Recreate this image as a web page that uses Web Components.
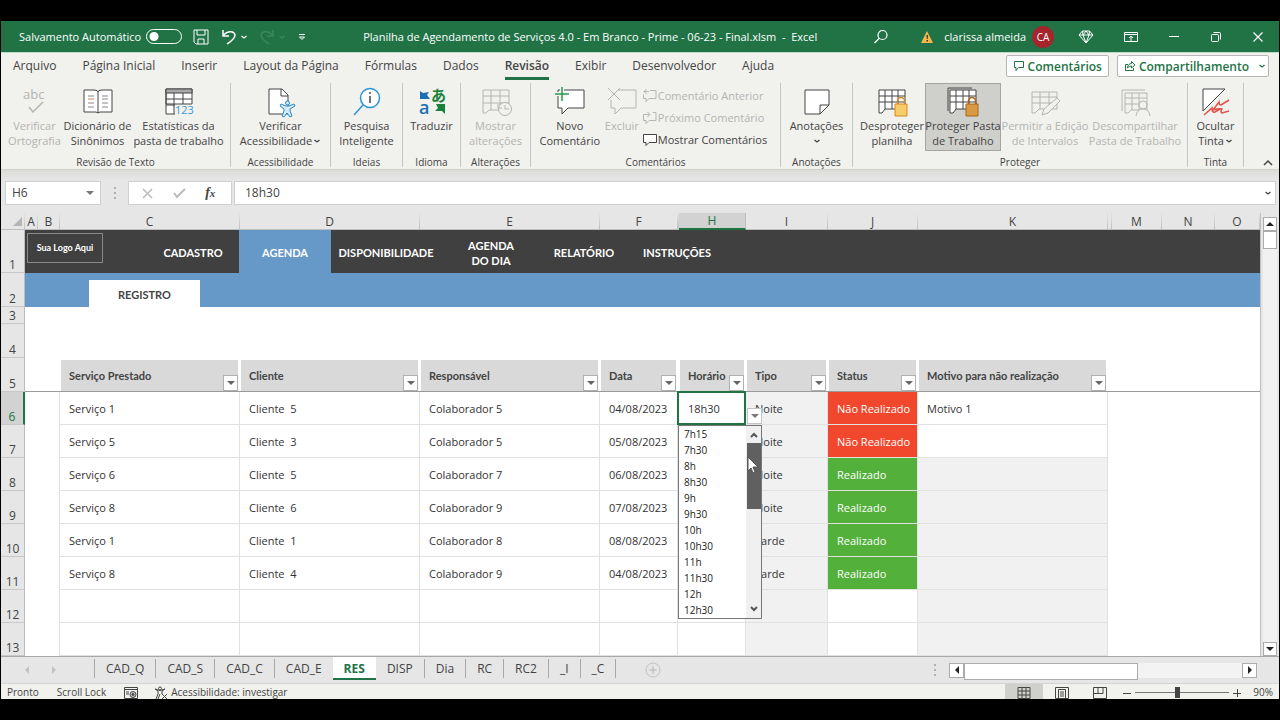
<!DOCTYPE html>
<html lang="pt-BR">
<head>
<meta charset="utf-8">
<meta name="viewport" content="width=device-width, initial-scale=1">
<title>Planilha de Agendamento de Serviços</title>
<style>
  body {
    margin: 0;
    padding: 21px 1px;
    background: #000;
    --green: #217346;
    --ink: #444;
    --line: #e1e1e1;
    --chrome: #e6e6e6;
    --blue: #6699c8;
    font-family: "Open Sans", "Noto Sans", sans-serif;
    font-size: 11px;
    line-height: 15px;
    color: var(--ink);
  }
</style>
</head>
<body>
<excel-window></excel-window>

<script>
const BASE = `
  * { box-sizing: border-box; margin: 0; }
  button, input, select { font: inherit; color: inherit; background: none; border: 0; border-radius: 0; padding: 0; }
  a { color: inherit; text-decoration: none; }
  svg { display: block; flex: none; fill: none; overflow: visible; }
  svg:not([stroke]) { stroke: currentColor; }
`

const GRID = '<path d="M3 4h26v19H9l-3 4H3z" fill="#fff"/><path d="M3 10h26M3 16h26M9 4v19M16 4v19M22 4v19"/>'

const ICONS = {
  save: '<svg width="18" height="18" viewBox="0 0 18 18"><path d="M2 2h14v14H4l-2-2zM5 2v5h8V2M6 16v-5h6v5"/></svg>',
  undo: '<svg width="18" height="18" viewBox="0 0 18 18" stroke="currentColor" stroke-width="1.500"><path d="M3 2v6h6M3 8c3-5 11-6 12-1 0 4-5 7-8 9"/></svg>',
  redo: '<svg width="18" height="18" viewBox="0 0 18 18" stroke="currentColor" stroke-width="1.500"><path d="M15 2v6H9M15 8C12 3 4 2 3 7c0 4 5 7 8 9"/></svg>',
  chevron: '<svg width="8" height="8" viewBox="0 0 8 8" stroke-width="1.300"><path d="M1.500 3l2.500 2 2.500-2"/></svg>',
  more: '<svg width="10" height="10" viewBox="0 0 10 10"><path d="M2 2.500h6M2.500 5L5 7.500 7.500 5z"/></svg>',
  search: '<svg width="16" height="16" viewBox="0 0 16 16" stroke-width="1.200"><circle cx="9.500" cy="6" r="4.500"/><path d="M6.300 9.300L1.500 14"/></svg>',
  warning: '<svg width="14" height="14" viewBox="0 0 14 14" stroke="none"><path d="M7 1l6 12H1z" fill="#f7b64a"/><path d="M6.500 5h1.500l-.3 4h-.9zM6.500 10h1.500v1.500H6.500z" fill="#333"/></svg>',
  diamond: '<svg width="16" height="16" viewBox="0 0 16 16"><path d="M4.500 2h7L15 6l-7 8-7-8zM1 6h14M5 6l3 8 3-8-3-4zM4.500 2L5 6M11.500 2L11 6"/></svg>',
  display: '<svg width="14" height="12" viewBox="0 0 14 12"><path d="M.5 1.500h13v9H.5zM.5 3.500h13M7 10V5M5 7l2-2 2 2"/></svg>',
  minimize: '<svg width="12" height="12" viewBox="0 0 12 12"><path d="M1 5.500h10"/></svg>',
  restore: '<svg width="12" height="12" viewBox="0 0 12 12"><rect x="1.500" y="3.500" width="7" height="7" rx="1"/><path d="M3.500 1.500h6q1 0 1 1v6"/></svg>',
  close: '<svg width="12" height="12" viewBox="0 0 12 12" stroke-width="1.200"><path d="M1.500 1.500l9 9M10.500 1.500l-9 9"/></svg>',
  comment: '<svg width="12" height="12" viewBox="0 0 12 12"><path d="M1.500 1.500h9v6h-5l-2.500 3v-3H1.500z"/></svg>',
  share: '<svg width="12" height="12" viewBox="0 0 12 12"><path d="M4 4.500H1.500v6h8V8M3.500 8c0-3 2-4.500 4-4.500v-2L11 5 7.500 8V6Q5 6 3.500 8z"/></svg>',
  spelling: '<svg width="32" height="32" viewBox="0 0 32 32"><text x="4" y="13" font-size="13" fill="currentColor" stroke="none">abc</text><path d="M10 21l4 5 10-10" stroke-width="1.500"/></svg>',
  book: '<svg width="32" height="32" viewBox="0 0 32 32"><path d="M2 4h10q4 0 4 2 0-2 4-2h10v22H18l-2 1-2-1H2z" fill="#fff"/><path d="M16 6v21"/><path d="M6 10h6M6 17h6M6 21h6M20 10h6M20 13h6M20 17h6M20 21h6" stroke="#888"/><path d="M6 13h6" stroke="#e07a6a"/></svg>',
  stats: '<svg width="32" height="32" viewBox="0 0 32 32"><path d="M3 3h26v15H3zM3 3v25h9" fill="#fff"/><path d="M3 3h26v4H3z" fill="#aaa"/><path d="M3 13h26M3 19h9M11 7v21M20 7v11"/><text x="12" y="28" font-size="11" fill="#3b9bd8" stroke="none">123</text></svg>',
  accessibility: '<svg width="32" height="32" viewBox="0 0 32 32"><path d="M4 3h13l6 6v19H4z" fill="#fff"/><path d="M16 3v7h7"/><g stroke="#2a86c9" fill="#d6ebf8"><path d="M16 18l5 2h3l5-2 1 2-5 3v2l2 5-2 1-3-4-3 4-2-1 2-5v-2l-4-3z"/><circle cx="22.500" cy="17" r="2"/></g></svg>',
  insights: '<svg width="32" height="32" viewBox="0 0 32 32"><g stroke="#2a96d8" stroke-width="1.500"><circle cx="19" cy="12" r="9.500" fill="#fff"/><path d="M12 19l-9 10"/></g><path d="M19 10v7M19 6v2" stroke-width="1.500"/></svg>',
  translate: '<svg width="32" height="32" viewBox="0 0 32 32"><g stroke="none"><text x="3" y="28" font-size="18" font-weight="600" fill="#1b6fb5">a</text><text x="15" y="15" font-size="15" font-weight="700" font-family="Noto Sans CJK JP" fill="#188038">あ</text><path d="M4 5l3 2 6-1-2 3 3 4H4z" fill="#1b6fb5"/><path d="M20 18h9v10l-3-3h-7l3-3z" fill="#188038"/></g></svg>',
  changes: '<svg width="32" height="32" viewBox="0 0 32 32"><path d="M3 4h26v20H9l-3 3H3zM3 10h26M3 17h26M11 4v20M20 4v20"/><circle cx="25" cy="23" r="6.500" fill="#f1f1ee"/><path d="M25 19v4h4M18 18v4h4"/></svg>',
  newComment: '<svg width="32" height="32" viewBox="0 0 32 32"><path d="M4 4h26v18H14l-6 6v-6H4z" fill="#fff"/><path d="M8 0v14M0 8h13" stroke="#f1f1ee" stroke-width="4"/><path d="M8 1v14M1 8h14" stroke="#2b9a52" stroke-width="1.500"/></svg>',
  remove: '<svg width="32" height="32" viewBox="0 0 32 32"><path d="M12 4h18v18H15l-6 6v-6H5v-8M2 2l12 12M14 2L2 14"/></svg>',
  previous: '<svg width="16" height="16" viewBox="0 0 16 16"><path d="M8 3.500h6v8H7l-3 3v-3H1.500v-4M7 4.500H2M4.500 2L2 4.500 4.500 7"/></svg>',
  next: '<svg width="16" height="16" viewBox="0 0 16 16"><path d="M11 3.500h3v8H7l-3 3v-3H1.500v-6h6M5.500 3L8 5.500 5.500 8"/></svg>',
  show: '<svg width="16" height="16" viewBox="0 0 16 16"><path d="M1.500 3.500h13v8H7l-3 3v-3H1.500z" fill="#fff"/></svg>',
  note: '<svg width="32" height="32" viewBox="0 0 32 32"><path d="M4 4h24v15l-9 9H4z" fill="#fff"/><path d="M19 28v-9h9"/></svg>',
  lockSheet: `<svg width="32" height="32" viewBox="0 0 32 32">${GRID}<path d="M21.500 19v-4a3 3 0 0 1 7 0v4" stroke="#d98a1e" stroke-width="1.500"/><path d="M19 18h12v12H19z" fill="#f9cc6a" stroke="#d98a1e"/></svg>`,
  lockBook: `<svg width="32" height="32" viewBox="0 0 32 32"><path d="M1 25V2h24"/>${GRID}<path d="M21.500 19v-4a3 3 0 0 1 7 0v4" stroke="#a8641a" stroke-width="1.500"/><path d="M19 18h12v12H19z" fill="#d99a45" stroke="#a8641a"/></svg>`,
  ranges: '<svg width="32" height="32" viewBox="0 0 32 32"><path d="M3 6h25v17H10l-4 4H3zM3 11h25M3 17h25M11 6v17M20 6v17"/><path d="M13 29l2-6L28 12l3 3-12 12z" fill="#f1f1ee"/></svg>',
  unshare: '<svg width="32" height="32" viewBox="0 0 32 32"><path d="M3 25V4h23M6 7h22v17H12l-3 3H6zM6 12h22M6 18h22M13 7v17M20 7v17"/><circle cx="24" cy="19" r="4" fill="#f1f1ee"/><path d="M17 30q1-7 7-7t7 7" fill="#f1f1ee"/></svg>',
  ink: '<svg width="32" height="32" viewBox="0 0 32 32"><path d="M3 3h22L3 25z" fill="#fff"/><path d="M29 14l-8 5q-2 0-2-3l-6 8q6-2 9-1-2 3 0 4l7-2M4 29l8-7q0 5 3 4l5-3" stroke="#e0524a" stroke-width="1.500"/></svg>',
  cancel: '<svg width="12" height="12" viewBox="0 0 12 12" stroke-width="1.500"><path d="M2 2l9 9M11 2l-9 9"/></svg>',
  check: '<svg width="14" height="12" viewBox="0 0 14 12" stroke-width="2"><path d="M2 6l3 4 8-8"/></svg>',
  left: '<svg width="6" height="8" viewBox="0 0 6 8" stroke="none"><path d="M5 0v8L1 4z" fill="currentColor"/></svg>',
  right: '<svg width="6" height="8" viewBox="0 0 6 8" stroke="none"><path d="M1 0v8l4-4z" fill="currentColor"/></svg>',
  up: '<svg width="8" height="6" viewBox="0 0 8 6" stroke="none"><path d="M0 5h8L4 1z" fill="currentColor"/></svg>',
  down: '<svg width="8" height="6" viewBox="0 0 8 6" stroke="none"><path d="M0 1h8L4 5z" fill="currentColor"/></svg>',
  dots: '<svg width="2" height="12" viewBox="0 0 2 12" stroke="none"><path d="M0 0h2v2H0zM0 5h2v2H0zM0 10h2v2H0z" fill="#b0b0b0"/></svg>',
  plus: '<svg width="16" height="16" viewBox="0 0 16 16"><circle cx="8" cy="8" r="7"/><path d="M8 4.500v7M4.500 8h7" stroke-width="1.500"/></svg>',
  macro: '<svg width="14" height="12" viewBox="0 0 14 12"><path d="M.5.500h13v11H.5zM.5 2.500h13M2 5h3M2 7h3"/><circle cx="9" cy="7.500" r="3" fill="#ccc"/><circle cx="9" cy="7.500" r="1" fill="#444"/></svg>',
  person: '<svg width="14" height="14" viewBox="0 0 14 14"><circle cx="6" cy="2.500" r="1.500"/><path d="M1 3l3 2v3l-2 5M11 3L8 5v3M1 3q5 3 10 0M6 8l-2 5M8 8l5 5M13 8l-5 5"/></svg>',
  normal: '<svg width="14" height="14" viewBox="0 0 14 14"><path d="M1 1.500h12v11H1zM1 5h12M1 9h12M5 1v12M9 1v12"/></svg>',
  pageLayout: '<svg width="14" height="14" viewBox="0 0 14 14"><path d="M.5 1.500h13v11H.5zM3.500 3.500h7v9h-7zM5 6h4M5 8h4M5 10h4"/></svg>',
  pageBreak: '<svg width="14" height="14" viewBox="0 0 14 14"><path d="M.5 1.500h13v11H.5zM5 1.500v6H.5M5 7.500h5v-6"/></svg>',
  pointer: '<svg width="12" height="18" viewBox="0 0 12 18"><path d="M1 1v14l3-3 2 5 2-1-2-5h5z" fill="#fff" stroke="#555"/></svg>'
}

class BaseElement extends HTMLElement {
  constructor() {
    super()
    this.attachShadow({ mode: "open" })
  }
  connectedCallback() {
    const template = document.createElement("template")
    template.innerHTML = `<style>${BASE}${this.getStyles()}</style>${this.getTemplate()}`
    this.shadowRoot.appendChild(template.content.cloneNode(true))
  }
}

class TitleBar extends BaseElement {
  getTemplate() {
    return `
      <label class="auto">Salvamento Automático <input type="checkbox"></label>
      <div class="quick">
        <button aria-label="Salvar">${ICONS.save}</button>
        <button aria-label="Desfazer">${ICONS.undo}${ICONS.chevron}</button>
        <button class="off" aria-label="Refazer">${ICONS.redo}${ICONS.chevron}</button>
        <button aria-label="Personalizar">${ICONS.more}</button>
      </div>
      <h1>Planilha de Agendamento de Serviços 4.0 - Em Branco - Prime - 06-23 - Final.xlsm&nbsp; -&nbsp; Excel</h1>
      <button class="search" aria-label="Pesquisar">${ICONS.search}</button>
      <div class="user">${ICONS.warning}<span>clarissa almeida</span><b>CA</b></div>
      <div class="controls">
        <button aria-label="Premium">${ICONS.diamond}</button>
        <button aria-label="Exibição da faixa">${ICONS.display}</button>
        <button aria-label="Minimizar">${ICONS.minimize}</button>
        <button aria-label="Restaurar">${ICONS.restore}</button>
        <button aria-label="Fechar">${ICONS.close}</button>
      </div>
    `
  }
  getStyles() {
    return `
      :host {
        display: flex;
        align-items: center;
        height: 31px;
        padding: 0 12px 0 18px;
        background: var(--green);
        color: #fff;
        white-space: nowrap;
      }
      .auto { display: flex; align-items: center; gap: 5px; }
      input {
        appearance: none;
        width: 36px;
        height: 15px;
        border: 1px solid #fff;
        border-radius: 8px;
        background: radial-gradient(circle at 7px 50%, #fff 4px, transparent 5px);
      }
      .quick { display: flex; align-items: center; gap: 10px; margin-left: 10px; }
      .quick button { display: flex; align-items: center; gap: 2px; }
      .quick .off { color: #3d865c; margin-right: 1px; }
      h1 { margin-left: 56px; font-size: 11px; font-weight: 400; }
      .search { margin-left: auto; }
      .user { display: flex; align-items: center; gap: 10px; margin: 0 24px 0 31px; }
      b {
        width: 22px;
        line-height: 22px;
        margin-left: -4px;
        border-radius: 50%;
        background: #a4262c;
        text-align: center;
        font-size: 10px;
        font-weight: 400;
      }
      .controls { display: flex; align-items: center; gap: 30px; padding-right: 3px; }
    `
  }
}
customElements.define("title-bar", TitleBar)

class RibbonTabs extends BaseElement {
  getTemplate() {
    const tabs = ["Arquivo", "Página Inicial", "Inserir", "Layout da Página", "Fórmulas", "Dados", "Revisão", "Exibir", "Desenvolvedor", "Ajuda"]
    return `
      <nav>
        ${tabs.map(tab => `<a href="#"${tab === "Revisão" ? ' class="active"' : ""}>${tab}</a>`).join("")}
      </nav>
      <button>${ICONS.comment}Comentários</button>
      <button>${ICONS.share}Compartilhamento${ICONS.chevron}</button>
    `
  }
  getStyles() {
    return `
      :host {
        display: flex;
        align-items: flex-start;
        gap: 8px;
        height: 29px;
        padding: 2px 10px 0 12px;
        background: #f1f1ee;
        border-top: 1px solid #b9dcc6;
        font-size: 12px;
        white-space: nowrap;
      }
      nav { display: flex; gap: 26px; margin-right: auto; }
      a { line-height: 22px; border-bottom: 3px solid transparent; }
      .active { font-weight: 600; border-color: var(--green); }
      button {
        display: flex;
        align-items: center;
        gap: 3px;
        height: 22px;
        padding: 0 6px;
        background: #fff;
        border: 1px solid #b5b5b5;
        border-radius: 2px;
        color: var(--green);
        font-weight: 600;
      }
      button:last-of-type { padding-right: 2px; }
      button:last-of-type svg:last-child { margin-left: 6px; }
    `
  }
}
customElements.define("ribbon-tabs", RibbonTabs)

class RibbonButton extends BaseElement {
  getTemplate() {
    return `<button${this.hasAttribute("off") ? " disabled" : ""}>${ICONS[this.getAttribute("icon")]}<span><slot></slot>${this.hasAttribute("menu") ? ICONS.chevron : ""}</span></button>`
  }
  getStyles() {
    return `
      :host { display: block; color: var(--ink); }
      :host([off]) { color: #b4b4b2; }
      button {
        display: flex;
        flex-direction: column;
        align-items: center;
        width: 100%;
        height: 68px;
        padding-top: 2px;
        border: 1px solid transparent;
        white-space: nowrap;
      }
      :host([pressed]) button { background: #cfcfcb; border-color: #a5a5a2; }
      :host([small]) button { flex-direction: row; gap: 0; height: 16px; padding: 0; border: 0; }
      span { text-align: center; }
      span svg { display: inline-block; margin-left: 1px; }
    `
  }
}
customElements.define("ribbon-button", RibbonButton)

class RibbonGroup extends BaseElement {
  getTemplate() {
    return `<div><slot></slot></div><p>${this.getAttribute("label")}</p>`
  }
  getStyles() {
    return `
      :host {
        display: flex;
        flex-direction: column;
        justify-content: space-between;
        border-right: 1px solid #c6c6c4;
      }
      div { display: flex; justify-content: center; }
      p { text-align: center; font-size: 10px; line-height: 10px; }
    `
  }
}
customElements.define("ribbon-group", RibbonGroup)

class ExcelRibbon extends BaseElement {
  getTemplate() {
    return `
      <ribbon-group label="Revisão de Texto" style="width: 230px">
        <ribbon-button icon="spelling" off style="width: 56px">Verificar<br>Ortografia</ribbon-button>
        <ribbon-button icon="book" style="width: 70px">Dicionário de<br>Sinônimos</ribbon-button>
        <ribbon-button icon="stats" style="width: 92px">Estatísticas da<br>pasta de trabalho</ribbon-button>
      </ribbon-group>
      <ribbon-group label="Acessibilidade" style="width: 100px">
        <ribbon-button icon="accessibility" menu style="width: 90px">Verificar<br>Acessibilidade</ribbon-button>
      </ribbon-group>
      <ribbon-group label="Ideias" style="width: 72px">
        <ribbon-button icon="insights" style="width: 60px">Pesquisa<br>Inteligente</ribbon-button>
      </ribbon-group>
      <ribbon-group label="Idioma" style="width: 58px">
        <ribbon-button icon="translate" style="width: 50px">Traduzir</ribbon-button>
      </ribbon-group>
      <ribbon-group label="Alterações" style="width: 70px">
        <ribbon-button icon="changes" off style="width: 60px">Mostrar<br>alterações</ribbon-button>
      </ribbon-group>
      <ribbon-group label="Comentários" style="width: 250px">
        <ribbon-button icon="newComment" style="width: 64px">Novo<br>Comentário</ribbon-button>
        <ribbon-button icon="remove" off style="width: 40px">Excluir</ribbon-button>
        <div class="stack">
          <ribbon-button icon="previous" small off>Comentário Anterior</ribbon-button>
          <ribbon-button icon="next" small off>Próximo Comentário</ribbon-button>
          <ribbon-button icon="show" small>Mostrar Comentários</ribbon-button>
        </div>
      </ribbon-group>
      <ribbon-group label="Anotações" style="width: 72px">
        <ribbon-button icon="note" menu style="width: 60px">Anotações<br></ribbon-button>
      </ribbon-group>
      <ribbon-group label="Proteger" style="width: 335px">
        <ribbon-button icon="lockSheet" style="width: 66px">Desproteger<br>planilha</ribbon-button>
        <ribbon-button icon="lockBook" pressed style="width: 76px">Proteger Pasta<br>de Trabalho</ribbon-button>
        <ribbon-button icon="ranges" off style="width: 88px">Permitir a Edição<br>de Intervalos</ribbon-button>
        <ribbon-button icon="unshare" off style="width: 92px">Descompartilhar<br>Pasta de Trabalho</ribbon-button>
      </ribbon-group>
      <ribbon-group label="Tinta" style="width: 56px">
        <ribbon-button icon="ink" menu style="width: 44px">Ocultar<br>Tinta</ribbon-button>
      </ribbon-group>
      <button class="collapse" aria-label="Recolher">
        <svg width="10" height="8" viewBox="0 0 10 8" stroke-width="1.500"><path d="M1 6l4-4 4 4"/></svg>
      </button>
    `
  }
  getStyles() {
    return `
      :host {
        display: flex;
        height: 89px;
        padding: 2px 0;
        background: #f1f1ee;
        border-bottom: 1px solid #d0d0cc;
      }
      ribbon-group { flex: none; }
      .stack { display: flex; flex-direction: column; gap: 6px; padding: 4px 6px 0 0; }
      .collapse { align-self: flex-end; margin: 0 6px 0 auto; }
    `
  }
}
customElements.define("excel-ribbon", ExcelRibbon)

class FormulaBar extends BaseElement {
  getTemplate() {
    return `
      <div class="box name"><input value="H6" aria-label="Caixa de nome">${ICONS.down}</div>
      ${ICONS.dots}
      <div class="box tools">
        <button disabled aria-label="Cancelar">${ICONS.cancel}</button>
        <button disabled aria-label="Inserir">${ICONS.check}</button>
        <button class="fx">f<small>x</small></button>
      </div>
      <div class="box formula"><input value="18h30" aria-label="Barra de fórmulas">${ICONS.chevron}</div>
    `
  }
  getStyles() {
    return `
      :host {
        display: flex;
        align-items: center;
        height: 43px;
        padding: 2px 3px 0 4px;
        background: linear-gradient(#dcdcd9, var(--chrome) 10px);
      }
      .box {
        display: flex;
        align-items: center;
        height: 24px;
        padding: 0 6px;
        background: #fff;
        border: 1px solid #d0d0d0;
      }
      input { min-width: 0; flex: 1; font-size: 12px; outline: 0; }
      .name { width: 96px; margin-right: 13px; }
      .name svg { color: #777; }
      .tools { width: 104px; margin: 0 2px 0 12px; padding: 0 6px 0 2px; justify-content: space-around; }
      .tools button:disabled { color: #bbb; }
      .fx { font: italic 700 14px "Liberation Serif", serif; }
      .fx small { font-size: 11px; }
      .formula { flex: 1; padding: 0 3px 0 10px; }
    `
  }
}
customElements.define("formula-bar", FormulaBar)

class SheetNav extends BaseElement {
  getTemplate() {
    const links = ["CADASTRO", "AGENDA", "DISPONIBILIDADE", "AGENDA<br>DO DIA", "RELATÓRIO", "INSTRUÇÕES"]
    return `
      <div class="logo">Sua Logo Aqui</div>
      <nav>${links.map(link => `<a href="#"${link === "AGENDA" ? ' class="active"' : ""}>${link}</a>`).join("")}</nav>
    `
  }
  getStyles() {
    return `
      :host {
        display: flex;
        height: 43px;
        background: #404040;
        color: #fff;
        font-family: Lato, sans-serif;
        font-weight: 700;
      }
      .logo {
        width: 76px;
        height: 30px;
        margin: 3px 44px 0 2px;
        border: 1px solid #8a8a8a;
        font-size: 9px;
        line-height: 28px;
        text-align: center;
      }
      nav { display: grid; grid-template-columns: 92px 92px 110px 100px 86px 100px; }
      a { display: grid; place-content: center; text-align: center; padding-top: 2px; }
      .active { background: var(--blue); }
    `
  }
}
customElements.define("sheet-nav", SheetNav)

class TimeList extends BaseElement {
  getTemplate() {
    const times = ["7h15", "7h30", "8h", "8h30", "9h", "9h30", "10h", "10h30", "11h", "11h30", "12h", "12h30"]
    return `
      <button class="open" aria-label="Abrir lista">${ICONS.down}</button>
      <div class="popup">
        <select size="12" aria-label="Horário">${times.map(time => `<option>${time}</option>`).join("")}</select>
        <div class="scroll">
          <svg width="10" height="8" viewBox="0 0 10 8" stroke-width="2"><path d="M2 6l3-3 3 3"/></svg>
          <i></i>
          <svg width="10" height="8" viewBox="0 0 10 8" stroke-width="2"><path d="M2 2l3 3 3-3"/></svg>
        </div>
      </div>
      <div class="pointer">${ICONS.pointer}</div>
    `
  }
  getStyles() {
    return `
      :host { position: absolute; inset: 0; z-index: 2; }
      :host::before { content: ""; position: absolute; inset: -1px -1px -1px -2px; border: 2px solid var(--green); }
      .open {
        position: absolute;
        left: 100%;
        bottom: 0;
        margin-left: 2px;
        display: grid;
        place-content: center;
        width: 15px;
        height: 16px;
        background: #fff;
        border: 1px solid #c4c4c4;
        color: #777;
      }
      .popup {
        position: absolute;
        top: 100%;
        left: -1px;
        display: flex;
        width: 84px;
        margin-top: 1px;
        background: #fff;
        border: 1px solid #777;
      }
      select { flex: 1; min-width: 0; height: 192px; padding-top: 1px; overflow: hidden; font-size: 10px; outline: 0; color: #222; }
      option { height: 16px; min-height: 16px; padding: 0 5px; line-height: 16px; }
      .scroll { display: flex; flex-direction: column; align-items: center; width: 15px; padding: 5px 0; background: #f0f0f0; color: #555; }
      .scroll i { width: 14px; height: 66px; margin: 4px 0 auto; background: #606060; }
      .pointer { position: absolute; top: 64px; left: 68px; }
    `
  }
}
customElements.define("time-list", TimeList)

class SheetGrid extends BaseElement {
  getTemplate() {
    const columns = ["A", "B", "C", "D", "E", "F", "", "H", "I", "J", "K", "", "M", "N", "O"]
    const widths = [24, 13, 22, 180, 180, 180, 78, 1, 67, 82, 90, 190, 4, 50, 53]
    const fields = ["Serviço Prestado", "Cliente", "Responsável", "Data", "", "Horário", "Tipo", "Status", "Motivo para não realização"]
    const rows = [
      ["Serviço 1", "Cliente  5", "Colaborador 5", "04/08/2023", "", "18h30", "Noite", "Não Realizado", "Motivo 1"],
      ["Serviço 5", "Cliente  3", "Colaborador 5", "05/08/2023", "", "", "Noite", "Não Realizado", ""],
      ["Serviço 6", "Cliente  5", "Colaborador 7", "06/08/2023", "", "", "Noite", "Realizado", ""],
      ["Serviço 8", "Cliente  6", "Colaborador 9", "07/08/2023", "", "", "Noite", "Realizado", ""],
      ["Serviço 1", "Cliente  1", "Colaborador 8", "08/08/2023", "", "", "Tarde", "Realizado", ""],
      ["Serviço 8", "Cliente  4", "Colaborador 9", "04/08/2023", "", "", "Tarde", "Realizado", ""],
      ["", "", "", "", "", "", "", "", ""],
      ["", "", "", "", "", "", "", "", ""]
    ]
    return `
      <table>
        <colgroup>${widths.map(width => `<col style="width: ${width}px">`).join("")}<col></colgroup>
        <tr class="letters">
          <th><svg width="9" height="9" viewBox="0 0 9 9" stroke="none"><path d="M9 0v9H0z" fill="#b5b5b5"/></svg></th>
          ${columns.map(letter => `<th${letter === "H" ? ' class="current"' : ""}>${letter}</th>`).join("")}
        </tr>
        <tr class="r1"><th>1</th><td colspan="15"><sheet-nav></sheet-nav></td></tr>
        <tr class="r2"><th>2</th><td colspan="15"><a href="#">REGISTRO</a></td></tr>
        <tr class="r3"><th>3</th><td colspan="15"></td></tr>
        <tr class="r4"><th>4</th><td colspan="15"></td></tr>
        <tr class="fields">
          <th>5</th><td></td><td></td>
          ${fields.map(field => field
            ? `<td class="field"><div>${field}<button aria-label="Filtrar ${field}">${ICONS.down}</button></div></td>`
            : "<td></td>").join("")}
          <td colspan="4"></td>
        </tr>
        ${rows.map((row, i) => this.getRow(row, i + 6)).join("")}
      </table>
      <div class="scroll">
        <button aria-label="Acima">${ICONS.up}</button>
        <i></i>
        <button aria-label="Abaixo">${ICONS.down}</button>
      </div>
    `
  }
  getRow(row, number) {
    const cells = row.map((value, i) => {
      let name = "cell"
      if (i === 4) name = "cell thin"
      if (i === 6 || (i === 8 && number > 7)) name += " gray"
      if (value === "Realizado") name += " done"
      if (value === "Não Realizado") name += " missed"
      if (i === 5 && number === 6) name += " selected"
      return `<td class="${name}">${value}${name.includes("selected") ? "<time-list></time-list>" : ""}</td>`
    }).join("")
    return `<tr class="data"><th${number === 6 ? ' class="current"' : ""}>${number}</th><td></td><td class="edge"></td>${cells}<td colspan="4"></td></tr>`
  }
  getStyles() {
    return `
      :host { display: flex; flex: 1; background: var(--chrome); }
      table {
        flex: 1;
        min-width: 0;
        align-self: flex-start;
        table-layout: fixed;
        border-collapse: separate;
        border-spacing: 0;
        border-right: 1px solid #c0c0c0;
        background: #fff;
      }
      th, td { padding: 0; overflow: visible; }
      th {
        background: var(--chrome);
        border-right: 1px solid #bdbdbd;
        border-bottom: 1px solid #c8c8c8;
        vertical-align: bottom;
        font-size: 12px;
        font-weight: 400;
      }
      .letters { height: 17px; }
      .letters th { border-bottom-color: #aaa; border-image: linear-gradient(var(--chrome), #bdbdbd) 1; border-width: 0 1px 1px 0; line-height: 15px; }
      .letters svg { margin: 0 0 3px 12px; }
      .r1 { height: 43px; }
      .r2, .r4, .fields { height: 34px; }
      .r3 { height: 17px; }
      .data { height: 33px; }
      .r2 td { background: var(--blue); vertical-align: bottom; }
      .r2 a {
        display: block;
        width: 111px;
        margin-left: 64px;
        padding-top: 2px;
        background: #fff;
        font: 700 11px/25px Lato, sans-serif;
        text-align: center;
      }
      .fields td { border-bottom: 1px solid #9a9a9a; vertical-align: bottom; }
      .field div {
        display: flex;
        align-items: center;
        justify-content: space-between;
        height: 31px;
        margin-left: 1px;
        padding-left: 8px;
        border-right: 2px solid #fff;
        background: #d9d9d9;
        font: 700 11px/15px Lato, sans-serif;
      }
      .field button {
        align-self: flex-end;
        display: grid;
        place-content: center;
        width: 15px;
        height: 16px;
        background: #fff;
        border: 1px solid #b0b0b0;
        color: #666;
      }
      .cell { padding-left: 9px; border-right: 1px solid var(--line); border-bottom: 1px solid var(--line); white-space: pre; color: #333; }
      .edge { border-right: 1px solid var(--line); }
      .thin { padding: 0; border-right: 0; }
      .gray { background: #f1f1f1; }
      .done, .missed { background: #53b03b; color: #fff; }
      .missed { background: #f1472c; }
      .selected { position: relative; }
      .current { background: #d2d2d2; color: var(--green); }
      .letters .current { border-image: none; border-bottom: 2px solid var(--green); }
      .data .current { border-right: 2px solid var(--green); }
      .scroll { display: flex; flex-direction: column; width: 18px; padding: 4px 2px 0; }
      .scroll button {
        display: grid;
        place-content: center;
        height: 14px;
        background: #fff;
        border: 1px solid #ababab;
        color: #222;
      }
      .scroll i { flex: 1; background: #f1f1f1; }
      .scroll i::before { content: ""; display: block; height: 16px; background: #fff; border: 1px solid #ababab; }
    `
  }
}
customElements.define("sheet-grid", SheetGrid)

class SheetTabs extends BaseElement {
  getTemplate() {
    const tabs = ["CAD_Q", "CAD_S", "CAD_C", "CAD_E", "RES", "DISP", "Dia", "RC", "RC2", "_I", "_C"]
    return `
      <button class="arrow" aria-label="Anterior">${ICONS.left}</button>
      <button class="arrow" aria-label="Próxima">${ICONS.right}</button>
      <nav>${tabs.map(tab => `<a href="#"${tab === "RES" ? ' class="active"' : ""}>${tab}</a>`).join("")}</nav>
      <button class="add" aria-label="Nova planilha">${ICONS.plus}</button>
      <div class="dots">${ICONS.dots}</div>
      <div class="scroll">
        <button aria-label="Esquerda">${ICONS.left}</button>
        <i></i>
        <button aria-label="Direita">${ICONS.right}</button>
      </div>
    `
  }
  getStyles() {
    return `
      :host {
        display: flex;
        align-items: center;
        height: 27px;
        padding: 0 22px 0 12px;
        background: var(--chrome);
        border-top: 1px solid #a8a8a8;
        font-size: 12px;
      }
      .arrow { width: 27px; display: grid; place-content: center; color: #c2c2c2; }
      nav { display: flex; align-self: flex-start; margin-left: 27px; border-left: 1px solid #a8a8a8; margin-top: 2px; height: 19px; }
      a { padding: 0 11px; border-right: 1px solid #a8a8a8; line-height: 20px; }
      .active {
        height: 23px;
        margin: -2px 0 0 -1px;
        background: #fff;
        border-right: 0;
        border-bottom: 2px solid var(--green);
        color: var(--green);
        font-weight: 700;
        line-height: 24px;
      }
      .add { margin-left: 29px; color: #c2c2c2; }
      .dots { margin: 0 13px 0 auto; }
      .scroll { display: flex; width: 308px; height: 15px; }
      .scroll button { display: grid; place-content: center; width: 15px; background: #fff; border: 1px solid #ababab; color: #222; }
      .scroll i { flex: 1; background: #f3f3f3; }
      .scroll i::before { content: ""; display: block; width: 62%; height: 15px; background: #fff; border: 1px solid #ababab; }
    `
  }
}
customElements.define("sheet-tabs", SheetTabs)

class StatusBar extends BaseElement {
  getTemplate() {
    return `
      <span>Pronto</span>
      <span>Scroll Lock</span>
      ${ICONS.macro}
      <span class="access">${ICONS.person}Acessibilidade: investigar</span>
      <div class="views">
        <button class="active" aria-label="Normal">${ICONS.normal}</button>
        <button aria-label="Layout da Página">${ICONS.pageLayout}</button>
        <button aria-label="Quebra de Página">${ICONS.pageBreak}</button>
      </div>
      <button aria-label="Reduzir"><svg width="8" height="8" viewBox="0 0 8 8"><path d="M0 4.500h8"/></svg></button>
      <input type="range" min="10" max="190" value="90" aria-label="Zoom">
      <button aria-label="Ampliar"><svg width="8" height="8" viewBox="0 0 8 8"><path d="M0 4.500h8M4.500 0v8"/></svg></button>
      <span class="zoom">90%</span>
    `
  }
  getStyles() {
    return `
      :host {
        display: flex;
        align-items: center;
        height: 16px;
        padding: 0 6px;
        background: #f1f1ee;
        border-top: 1px solid #d4d4d4;
        font-size: 10px;
        overflow: hidden;
        white-space: nowrap;
      }
      :host > * { flex: none; }
      span { margin-right: 18px; padding-top: 2px; }
      svg { margin-top: 2px; }
      .access { display: flex; align-items: center; gap: 3px; margin-left: 16px; }
      .access svg { margin: 0; }
      .views { display: flex; margin-left: auto; margin-right: 4px; }
      .views button { display: grid; place-content: center; width: 38px; height: 16px; }
      .views .active { background: #cfcfcb; }
      input {
        appearance: none;
        width: 94px;
        height: 12px;
        margin: 2px 4px 0;
        background: linear-gradient(#777, #777) center / 100% 1px no-repeat;
      }
      input::-webkit-slider-thumb { appearance: none; width: 5px; height: 11px; background: #444; }
      .zoom { margin: 0 0 0 12px; }
    `
  }
}
customElements.define("status-bar", StatusBar)

class ExcelWindow extends BaseElement {
  getTemplate() {
    return `
      <title-bar></title-bar>
      <ribbon-tabs></ribbon-tabs>
      <excel-ribbon></excel-ribbon>
      <formula-bar></formula-bar>
      <sheet-grid></sheet-grid>
      <sheet-tabs></sheet-tabs>
      <status-bar></status-bar>
    `
  }
  getStyles() {
    return `
      :host { display: flex; flex-direction: column; min-height: calc(100vh - 42px); background: var(--chrome); }
    `
  }
}
customElements.define("excel-window", ExcelWindow)
</script>
</body>
</html>
